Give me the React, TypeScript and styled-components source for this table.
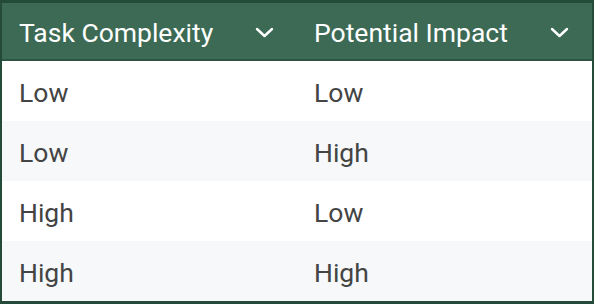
import styled, { createGlobalStyle } from 'styled-components';

const GlobalStyle = createGlobalStyle`
  html, body {
    margin: 0;
    padding: 0;
    background: #ffffff;
  }
  body {
    font-family: Roboto, "Liberation Sans", sans-serif;
  }
`;

const Table = styled.div`
  width: 594px;
  height: 304px;
  box-sizing: border-box;
  border: 2px solid #244a3a;
  border-top-width: 3px;
  border-bottom-width: 3px;
  display: grid;
  grid-template-columns: 295px 1fr;
  grid-template-rows: 58px repeat(4, 60px);
  overflow: hidden;
`;

const HeaderCell = styled.div`
  background: #3c6a55;
  border-bottom: 2px solid #2c5443;
  color: #ffffff;
  font-size: 26.5px;
  display: flex;
  align-items: center;
  justify-content: space-between;
  padding: 3px 23px 0 17px;
`;

const Cell = styled.div<{ $shade: boolean }>`
  background: ${(p) => (p.$shade ? '#f6f8f9' : '#ffffff')};
  color: #444444;
  font-size: 26.5px;
  display: flex;
  align-items: center;
  padding: 3px 17px 0;
`;

const Chevron = () => (
  <svg width="19" height="11" viewBox="0 0 19 11" fill="none">
    <path d="M2 2 L9.5 9 L17 2" stroke="#ffffff" strokeWidth="2.4" strokeLinecap="round" strokeLinejoin="round" />
  </svg>
);

const rows = [
  ['Low', 'Low'],
  ['Low', 'High'],
  ['High', 'Low'],
  ['High', 'High'],
];

export default function App() {
  return (
    <>
      <GlobalStyle />
      <Table>
        <HeaderCell>
          Task Complexity
          <Chevron />
        </HeaderCell>
        <HeaderCell>
          Potential Impact
          <Chevron />
        </HeaderCell>
        {rows.map((row, i) =>
          row.map((value, j) => (
            <Cell key={`${i}-${j}`} $shade={i % 2 === 1}>
              {value}
            </Cell>
          ))
        )}
      </Table>
    </>
  );
}
